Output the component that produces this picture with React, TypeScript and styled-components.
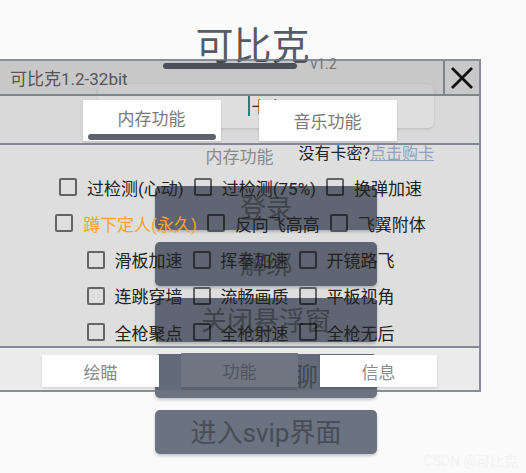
import styled, { createGlobalStyle } from 'styled-components';

const GlobalStyle = createGlobalStyle`
  body {
    margin: 0;
    background: #fafafa;
    font-family: Roboto, "Noto Sans CJK SC", sans-serif;
  }
`;

const Screen = styled.div`
  position: relative;
  width: 526px;
  height: 473px;
  overflow: hidden;
  background: #fafafa;
`;

// the app behind the floating window
const AppColumn = styled.main`
  display: flex;
  flex-direction: column;
  align-items: center;
  padding: 28px 0 0 6px;
`;

const TitleRow = styled.div`
  display: flex;
  align-items: flex-end;
`;

const BigTitle = styled.h1`
  margin: 0;
  font-size: 38px;
  line-height: 37px;
  font-weight: 400;
  color: #555b63;
`;

const Version = styled.span`
  font-size: 14px;
  line-height: 14px;
  color: #8b8f95;
  margin: 0 0 -6px 1px;
`;

const UnderBar = styled.div`
  width: 134px;
  height: 6px;
  border-radius: 3px;
  background: #5f6670;
  margin: -2px 72px 0 0;
`;

const InputCard = styled.div`
  width: 336px;
  height: 44px;
  margin-top: 15px;
  background: #fff;
  border-radius: 6px;
  box-shadow: 0 1px 3px rgba(0, 0, 0, 0.14);
  display: flex;
  align-items: center;
  justify-content: center;
  gap: 1px;
`;

const Cursor = styled.span`
  width: 2px;
  height: 20px;
  background: #19998a;
`;

const Hint = styled.span`
  font-size: 16px;
  color: #333;
`;

const ButtonStack = styled.div`
  display: flex;
  flex-direction: column;
  gap: 12px;
  margin-top: 58px;
`;

const AppButton = styled.button`
  width: 222px;
  height: 44px;
  border: none;
  border-radius: 5px;
  background: #6b7280;
  color: #474d56;
  font-family: inherit;
  font-size: 26px;
  padding: 0 0 3px;
  box-shadow: 0 2px 3px rgba(0, 0, 0, 0.2);
`;

// floating window
const FloatWindow = styled.section`
  position: absolute;
  top: 59px;
  left: -2px;
  width: 483px;
  box-sizing: border-box;
  border: 2px solid rgba(107, 114, 128, 0.8);
`;

const TitleBar = styled.div`
  display: flex;
  height: 35px;
  box-sizing: border-box;
  background: rgba(0, 0, 0, 0.2);
  border-bottom: 2px solid rgba(107, 114, 128, 0.8);
`;

const WindowTitle = styled.div`
  flex: 1;
  display: flex;
  align-items: center;
  padding-left: 10px;
  font-size: 17px;
  color: #555;
`;

const CloseBox = styled.div`
  width: 34px;
  display: flex;
  align-items: center;
  justify-content: center;
  border-left: 2px solid rgba(107, 114, 128, 0.8);
`;

const TabStrip = styled.div`
  display: flex;
  justify-content: center;
  align-items: flex-start;
  gap: 38px;
  height: 49px;
  box-sizing: border-box;
  padding-top: 4px;
  background: rgba(0, 0, 0, 0.13);
  border-bottom: 2px solid rgba(107, 114, 128, 0.8);
`;

const TopTab = styled.div`
  width: 138px;
  height: 41px;
  display: flex;
  flex-direction: column;
  background: #fff;
  color: #7b7b7b;
  font-size: 17px;
  box-shadow: 0 1px 2px rgba(0, 0, 0, 0.15);
`;

const TabText = styled.span`
  flex: 1;
  display: flex;
  align-items: center;
  justify-content: center;
`;

const TabBar = styled.div`
  height: 6px;
  margin: 0 5px 1px;
  border-radius: 3px;
  background: #5b626c;
`;

const Content = styled.div`
  height: 203px;
  overflow: hidden;
  box-sizing: border-box;
  background: rgba(0, 0, 0, 0.11);
  border-bottom: 2px solid rgba(107, 114, 128, 0.8);
`;

const InfoHeader = styled.div`
  display: grid;
  grid-template-columns: 1fr auto 1fr;
  height: 24px;
`;

const SectionLabel = styled.span`
  grid-column: 2;
  font-size: 17px;
  line-height: 24px;
  color: #8a8a8a;
`;

const BuyHint = styled.span`
  justify-self: start;
  align-self: start;
  margin-left: 25px;
  font-size: 16px;
  line-height: 17px;
  color: #222;
  white-space: nowrap;
`;

const BuyLink = styled.span`
  color: #8fa0c0;
  text-decoration: underline;
`;

const CheckRow = styled.div`
  display: flex;
  justify-content: center;
  align-items: center;
  gap: 10px;
  height: 36.25px;
  padding-left: 2px;
`;

const CheckItem = styled.label`
  display: flex;
  align-items: center;
  gap: 10px;
`;

const Box = styled.span`
  width: 18px;
  height: 18px;
  box-sizing: border-box;
  border: 2px solid rgba(0, 0, 0, 0.55);
  border-radius: 2px;
`;

const CheckLabel = styled.span<{ $accent?: boolean }>`
  font-size: 17px;
  color: ${p => (p.$accent ? '#f5a52e' : '#222')};
  white-space: nowrap;
`;

const BottomBar = styled.div`
  display: flex;
  justify-content: center;
  align-items: flex-start;
  gap: 22px;
  height: 42px;
  box-sizing: border-box;
  padding-top: 7px;
  background: rgba(0, 0, 0, 0.06);
`;

const BottomTab = styled.div<{ $active?: boolean }>`
  width: 117px;
  height: ${p => (p.$active ? '34px' : '32px')};
  margin-top: ${p => (p.$active ? '-2px' : '0')};
  display: flex;
  align-items: center;
  justify-content: center;
  font-size: 17px;
  background: ${p => (p.$active ? '#6f7682' : '#fff')};
  color: ${p => (p.$active ? '#4e555f' : '#8a8a8a')};
  box-shadow: 0 ${p => (p.$active ? '3px 1px #5c626d' : '1px 2px rgba(0, 0, 0, 0.12)')};
`;

const Watermark = styled.span`
  position: absolute;
  right: 8px;
  bottom: 3px;
  font-size: 14px;
  color: #f3f3f3;
`;

type Item = { text: string; accent?: boolean };

const rows: Item[][] = [
  [{ text: '过检测(心动)' }, { text: '过检测(75%)' }, { text: '换弹加速' }],
  [{ text: '蹲下定人(永久)', accent: true }, { text: '反向飞高高' }, { text: '飞翼附体' }],
  [{ text: '滑板加速' }, { text: '挥拳加速' }, { text: '开镜路飞' }],
  [{ text: '连跳穿墙' }, { text: '流畅画质' }, { text: '平板视角' }],
  [{ text: '全枪聚点' }, { text: '全枪射速' }, { text: '全枪无后' }],
];

const appButtons = ['登录', '解绑', '关闭悬浮窗', '加入群聊', '进入svip界面'];

export default function App() {
  return (
    <>
      <GlobalStyle />
      <Screen>
        <AppColumn>
          <TitleRow>
            <BigTitle>可比克</BigTitle>
            <Version>v1.2</Version>
          </TitleRow>
          <UnderBar />
          <InputCard>
            <Cursor />
            <Hint>卡密</Hint>
          </InputCard>
          <ButtonStack>
            {appButtons.map(b => (
              <AppButton key={b}>{b}</AppButton>
            ))}
          </ButtonStack>
        </AppColumn>

        <FloatWindow>
          <TitleBar>
            <WindowTitle>可比克1.2-32bit</WindowTitle>
            <CloseBox>
              <svg width="24" height="24" viewBox="0 0 24 24">
                <path d="M2 2 L22 22 M22 2 L2 22" stroke="#111" strokeWidth="2.8" />
              </svg>
            </CloseBox>
          </TitleBar>

          <TabStrip>
            <TopTab>
              <TabText>内存功能</TabText>
              <TabBar />
            </TopTab>
            <TopTab>
              <TabText>音乐功能</TabText>
            </TopTab>
          </TabStrip>

          <Content>
            <InfoHeader>
              <SectionLabel>内存功能</SectionLabel>
              <BuyHint>
                没有卡密?<BuyLink>点击购卡</BuyLink>
              </BuyHint>
            </InfoHeader>
            {rows.map((row, i) => (
              <CheckRow key={i}>
                {row.map(item => (
                  <CheckItem key={item.text}>
                    <Box />
                    <CheckLabel $accent={item.accent}>{item.text}</CheckLabel>
                  </CheckItem>
                ))}
              </CheckRow>
            ))}
          </Content>

          <BottomBar>
            <BottomTab>绘瞄</BottomTab>
            <BottomTab $active>功能</BottomTab>
            <BottomTab>信息</BottomTab>
          </BottomBar>
        </FloatWindow>

        <Watermark>CSDN @可比克</Watermark>
      </Screen>
    </>
  );
}
